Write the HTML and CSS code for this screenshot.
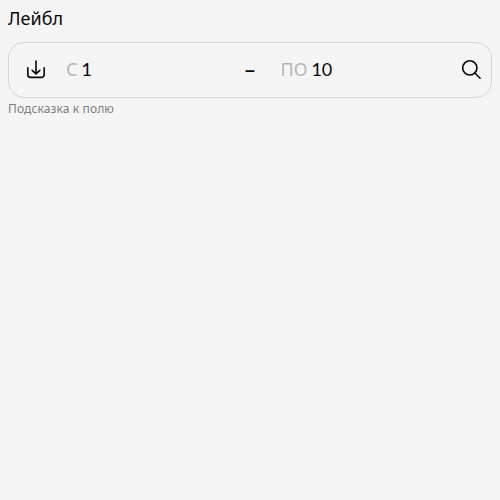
FILE: index.html
```html
<!DOCTYPE html>
<html lang="ru">
<head>
<meta charset="utf-8">
<title>Range</title>
<link rel="stylesheet" href="styles.css">
</head>
<body>
<div class="range">
  <label class="label"><span class="label-text">Лейбл</span></label>
  <div class="field">
    <svg class="icon" viewBox="0 0 24 24"><path d="M12 4v12.6M8.2 13.3l3.8 3.5 3.8-3.5M3.8 10.8v6.8a2.8 2.8 0 0 0 2.8 2.8h10.8a2.8 2.8 0 0 0 2.8-2.8v-6.8"/></svg>
    <div class="part first"><span class="before">С</span><span class="value">1</span></div>
    <span class="divider">–</span>
    <div class="part second"><span class="before">ПО</span><span class="value">10</span></div>
    <svg class="icon search" viewBox="0 0 24 24"><circle cx="9.8" cy="10.9" r="7.1"/><path d="M14.9 16l5.2 5.2"/></svg>
  </div>
  <div class="hint"><span class="hint-text">Подсказка к полю</span></div>
</div>
</body>
</html>
```
FILE: styles.css
```css
body{margin:7px 8px 8px;background:#f5f5f5;color:#080808;font-family:"Noto Sans","Open Sans",sans-serif}
.label{display:block;height:35px;font-size:18px;line-height:22px}
.field{display:flex;align-items:center;box-sizing:border-box;height:56px;padding:0 7px 2px 15px;border:1px solid #d6d6d6;border-radius:16px;font-size:18px;line-height:22px}
.icon{width:24px;height:24px;flex:none;fill:none;stroke:#080808;stroke-width:1.6;stroke-linecap:round;stroke-linejoin:round}
.part{display:flex;gap:4px}
.first{width:179px;margin-left:18px}
.second{flex:1;margin-left:25.5px}
.before{color:#b5b5b5}
.value{font-family:Lato,sans-serif;font-size:18px}
.divider{width:10px;font-weight:600;transform:translateX(.5px) scaleX(1.15)}
.hint{margin-top:4px;font-size:12px;line-height:14px;letter-spacing:.12px;color:#7d7d7d}
```
